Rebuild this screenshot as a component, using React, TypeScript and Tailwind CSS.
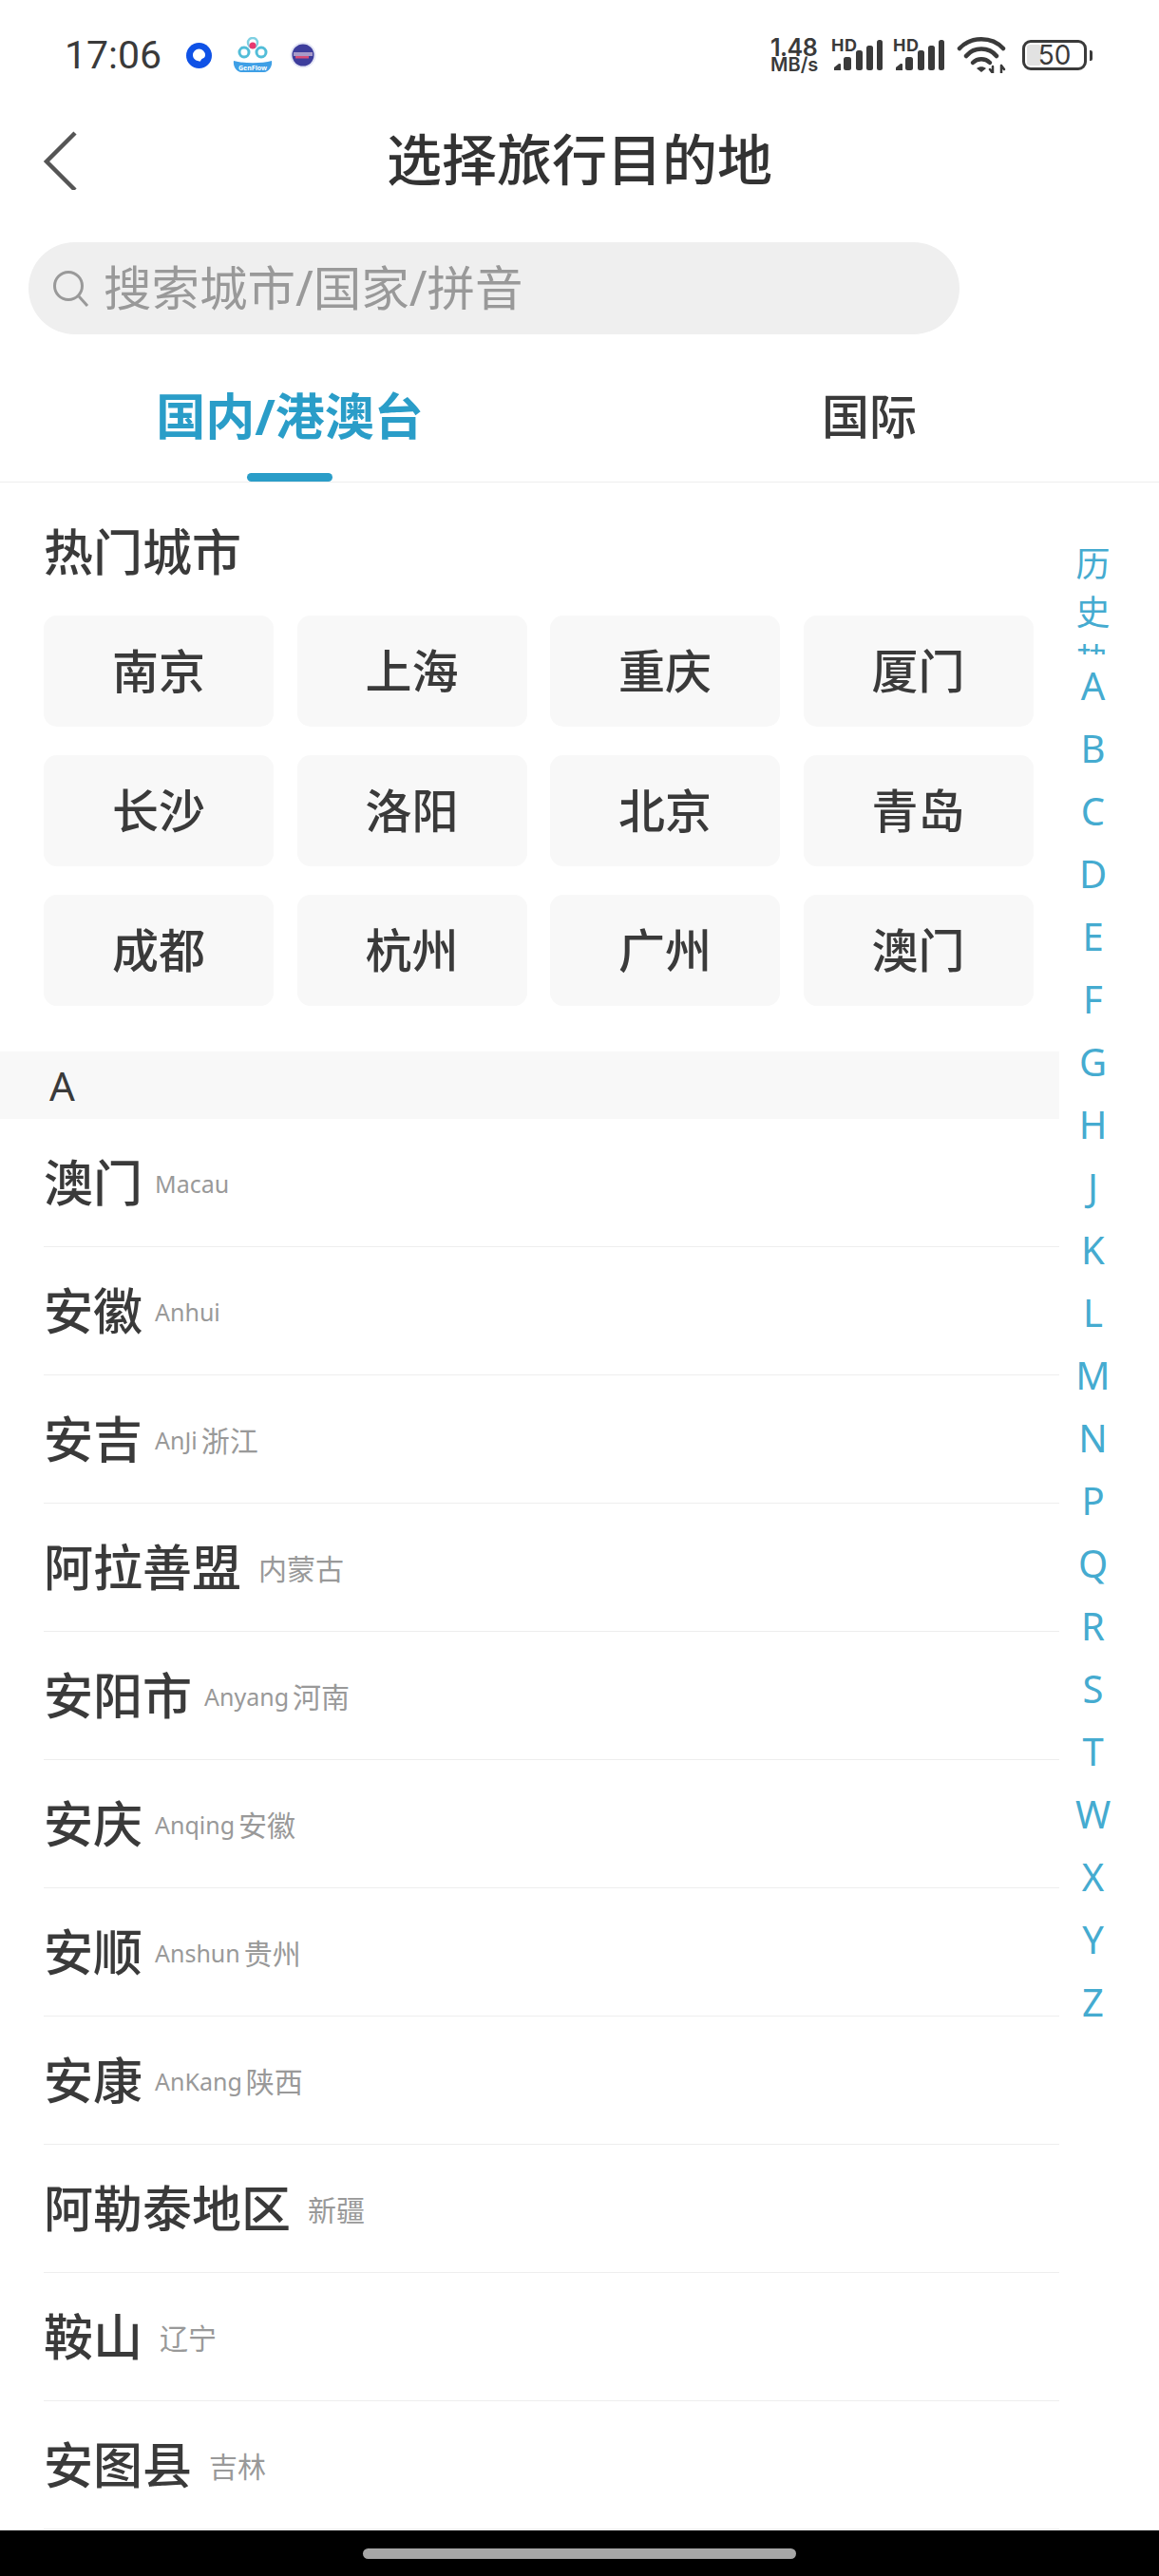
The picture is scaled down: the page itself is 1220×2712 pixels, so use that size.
import React from "react";

const FONT = '"Noto Sans","Noto Sans CJK SC",sans-serif';

const hot = ["南京", "上海", "重庆", "厦门", "长沙", "洛阳", "北京", "青岛", "成都", "杭州", "广州", "澳门"];
const rows: [string, string, string][] = [
  ["澳门", "Macau", ""],
  ["安徽", "Anhui", ""],
  ["安吉", "AnJi", "浙江"],
  ["阿拉善盟", "", "内蒙古"],
  ["安阳市", "Anyang", "河南"],
  ["安庆", "Anqing", "安徽"],
  ["安顺", "Anshun", "贵州"],
  ["安康", "AnKang", "陕西"],
  ["阿勒泰地区", "", "新疆"],
  ["鞍山", "", "辽宁"],
  ["安图县", "", "吉林"],
];
const letters = "ABCDEFGHJKLMNPQRSTWXYZ".split("");

function Signal() {
  return (
    <svg width="54" height="37" viewBox="0 -3 54 37" className="-mt-[3px] block shrink-0">
      <text x="0" y="13" fontSize="18" fontWeight="700" fill="#3a3a3a" fontFamily="Inter, sans-serif" textLength="27">HD</text>
      <path d="M3 33v-3l5-4h1a1 1 0 0 1 1 1v6z" fill="#3a3a3a" />
      <rect x="13" y="19" width="8" height="14" rx="2.5" fill="#3a3a3a" />
      <rect x="26" y="12" width="7" height="21" rx="2.5" fill="#3a3a3a" />
      <rect x="37" y="7" width="7" height="26" rx="2.5" fill="#3a3a3a" />
      <rect x="48" y="1" width="6" height="32" rx="2.5" fill="#3a3a3a" />
    </svg>
  );
}

function StatusBar() {
  return (
    <div className="flex h-[116px] items-center pl-[68px] pr-[70px] text-[#3a3a3a]">
      <span className="w-[100px] text-[41px] leading-none" style={{ fontFamily: "Roboto, sans-serif" }}>17:06</span>
      <svg width="27" height="27" viewBox="0 0 27 27" className="ml-[28px] shrink-0">
        <circle cx="13.5" cy="13.5" r="13.5" fill="#0f52e6" />
        <path d="M7 13a6.5 6.5 0 0 1 13 0c0 2-1 3-2.500 3.500-1.500.5-2 1.500-2.500 3-3.500 0-8-2-8-6.500z" fill="#fff" />
      </svg>
      <div className="relative ml-[22px] h-[38px] w-[42px] shrink-0">
        <svg width="42" height="38" viewBox="0 0 42 38" className="block">
          <circle cx="21" cy="6" r="5" fill="none" stroke="#7fd0e2" strokeWidth="2.500" />
          <circle cx="21" cy="9" r="3.500" fill="#e8386f" />
          <circle cx="12" cy="16" r="5" fill="none" stroke="#52bdd8" strokeWidth="3" />
          <circle cx="30" cy="16" r="5" fill="none" stroke="#52bdd8" strokeWidth="3" />
          <path d="M1 25c10 3 30 3 40 0 1 6-3 12-8 12H9c-5 0-9-6-8-12z" fill="#3e9fe6" />
        </svg>
        <span className="absolute bottom-[2px] left-0 w-full text-center text-[7px] font-bold leading-none text-white">GenFlow</span>
      </div>
      <svg width="28" height="28" viewBox="0 0 28 28" className="ml-[18px] shrink-0">
        <circle cx="14" cy="14" r="13.500" fill="#e4e6f5" />
        <circle cx="14" cy="14" r="11.500" fill="#3d3d9c" />
        <rect x="4" y="11" width="20" height="4" fill="#a79ac8" />
        <rect x="6" y="15" width="14" height="2.500" fill="#d84d77" />
      </svg>

      <div className="ml-auto flex items-center">
        <div className="flex w-[57px] flex-col font-semibold" style={{ fontFamily: "Inter, sans-serif" }}>
          <span className="text-[25px] leading-[21px] tracking-[-0.5px]">1.48</span>
          <span className="text-[20px] leading-[15px]">MB/s</span>
        </div>
        <div className="ml-[7px]"><Signal /></div>
        <div className="ml-[11px]"><Signal /></div>
        <svg width="52" height="38" viewBox="0 0 52 38" className="ml-[13px] shrink-0" fill="none" stroke="#3a3a3a" strokeLinecap="round">
          <path d="M3 12C15 -1 37 -1 49 12" strokeWidth="4.500" />
          <path d="M10 20C18 10 34 10 42 20" strokeWidth="4.500" />
          <path d="M17 27c5-5 13-5 18 0" strokeWidth="4.500" />
          <path d="M21 33c3-2.500 7-2.500 10 0l-5 4z" fill="#3a3a3a" stroke="none" />
          <path d="M38 31v7M35 34l3 4M47 38v-8M47 30l3 4" strokeWidth="2.500" />
        </svg>
        <div className="relative ml-[17px] flex h-[32px] w-[68px] shrink-0 items-center justify-center rounded-[9px] border-[3.5px] border-[#3a3a3a]">
          <div className="absolute bottom-[2px] left-[2px] top-[2px] w-[15px] rounded-[3px] bg-[#e2e2e2]" />
          <span className="relative text-[28px] leading-none" style={{ fontFamily: "Inter, sans-serif" }}>50</span>
        </div>
        <div className="ml-[3px] h-[11px] w-[3px] rounded-r-[2px] bg-[#3a3a3a]" />
      </div>
    </div>
  );
}

export default function App() {
  return (
    <div className="flex h-[2712px] w-[1220px] flex-col overflow-hidden bg-white text-[#3a3a3a]" style={{ fontFamily: FONT }}>
      <StatusBar />

      <div className="relative flex h-[139px] items-center justify-center pb-[35px]">
        <svg width="40" height="64" viewBox="0 0 40 64" className="absolute left-[44px] top-[20px]" fill="none" stroke="#555" strokeWidth="4.500">
          <path d="M35 4 5 34l30 30" />
        </svg>
        <h1 className="text-[58px] font-medium leading-none text-[#333]">选择旅行目的地</h1>
      </div>

      <div className="ml-[30px] flex h-[97px] w-[980px] items-center rounded-full bg-[#efefef] pl-[26px]">
        <svg width="38" height="40" viewBox="0 0 38 40" fill="none" stroke="#999" strokeWidth="3" className="shrink-0">
          <circle cx="16" cy="17" r="14.500" />
          <path d="M27 28l9 10" />
        </svg>
        <span className="ml-[15px] text-[50.5px] leading-none text-[#999]">搜索城市/国家/拼音</span>
      </div>

      <div className="flex h-[156px] border-b border-[#eeeeee]">
        <div className="relative flex w-[610px] items-center justify-center pt-[17px] text-[52px] font-bold leading-none text-[#2a9dc8]">
          国内/港澳台
          <div className="absolute bottom-0 left-[260px] h-[9px] w-[90px] rounded-full bg-[#2a9dc8]" />
        </div>
        <div className="flex w-[610px] items-center justify-center pt-[17px] text-[50px] font-medium leading-none">国际</div>
      </div>

      <div className="flex flex-1">
        <div className="w-[1115px]">
          <div className="flex h-[140px] items-center pb-[3px] pl-[46px] pt-[8px] text-[52px] font-medium leading-none">热门城市</div>
          <div className="ml-[46px] grid w-[1041.5px] grid-cols-4 gap-x-[24.5px] gap-y-[30px]">
            {hot.map((c) => (
              <div key={c} className="flex h-[117px] items-center justify-center rounded-[14px] bg-[#f8f8f8] text-[49px] font-medium leading-none">{c}</div>
            ))}
          </div>
          <div className="mt-[48px] flex h-[71px] items-center bg-[#f8f8f8] pl-[52px] text-[42px] leading-none">A</div>
          <div>
            {rows.map(([name, en, cn]) => (
              <div key={name} className="ml-[46px] flex h-[135px] items-center border-b border-[#eeeeee]">
                <span className="text-[52px] font-medium leading-none">{name}</span>
                <span className={en ? "ml-[13px] flex items-center gap-[4px] pt-[3px] leading-none text-[#999]" : "ml-[18px] flex items-center pt-[3px] leading-none text-[#999]"}>
                  {en && <span className="text-[25px]">{en}</span>}
                  {cn && <span className="text-[30px]">{cn}</span>}
                </span>
              </div>
            ))}
          </div>
        </div>

        <div className="flex flex-1 flex-col items-center pl-[2px] pr-[36px] pt-[60px] text-[#45abd0]">
          <div className="h-[121px] overflow-hidden text-center text-[36px] leading-[51px]">
            <div>历</div>
            <div>史</div>
            <div>热</div>
          </div>
          {letters.map((l) => (
            <div key={l} className="flex h-[66px] items-center justify-center text-[40px] leading-none">{l}</div>
          ))}
        </div>
      </div>

      <div className="flex h-[48px] items-center justify-center bg-black">
        <div className="h-[11px] w-[456px] rounded-full bg-[#a6a6a6]" />
      </div>
    </div>
  );
}
